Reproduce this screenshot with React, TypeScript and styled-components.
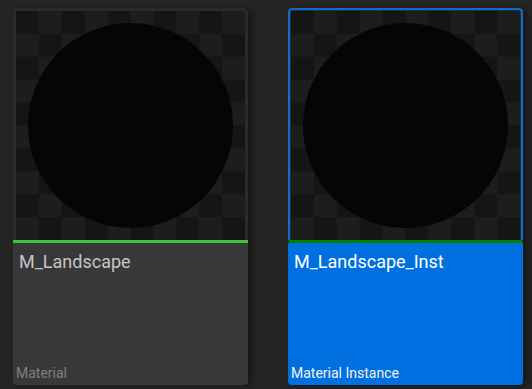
import React from 'react';
import styled, { createGlobalStyle, css } from 'styled-components';

const GlobalStyle = createGlobalStyle`
  html, body {
    margin: 0;
    padding: 0;
    background-color: #242424;
  }
  body {
    font-family: Roboto, 'Liberation Sans', sans-serif;
  }
`;

const Browser = styled.div`
  display: flex;
  flex-direction: row;
  gap: 40px;
  padding: 8px 0 0 13px;
  height: 389px;
  box-sizing: border-box;
`;

const Card = styled.div<{ $selected?: boolean }>`
  width: 235px;
  height: 377px;
  display: flex;
  flex-direction: column;
  border-radius: 4px;
  overflow: hidden;
  background-color: #2a2a2a;
  box-shadow: 4px 1px 6px rgba(0, 0, 0, 0.35);
`;

const ThumbFrame = styled.div<{ $selected?: boolean }>`
  padding: 3px 3px 0;
  border-radius: 4px 4px 0 0;
  ${({ $selected }) =>
    $selected &&
    css`
      padding: 1px 1px 0;
      border: 2px solid #0f6bd6;
      border-bottom: none;
    `}
`;

const Thumb = styled.div`
  width: 229px;
  height: 229px;
  display: flex;
  align-items: center;
  justify-content: center;
  background-color: #151515;
  background-image: conic-gradient(
    #1d1d1d 0 25%,
    #151515 0 50%,
    #1d1d1d 0 75%,
    #151515 0
  );
  background-size: 45.8px 45.8px;
`;

const Sphere = styled.div`
  width: 205px;
  height: 205px;
  border-radius: 50%;
  background-color: #050505;
`;

const TypeBar = styled.div<{ $color: string; $selected?: boolean }>`
  height: 3px;
  background-color: ${({ $color }) => $color};
  ${({ $selected }) =>
    $selected &&
    css`
      margin: 0 1px;
    `}
`;

const Info = styled.div<{ $selected?: boolean }>`
  flex: 1;
  display: flex;
  flex-direction: column;
  justify-content: space-between;
  padding: 8px 3px 3px;
  background-color: ${({ $selected }) => ($selected ? '#0070e0' : '#383838')};
`;

const Name = styled.span<{ $selected?: boolean }>`
  margin-left: 3px;
  font-size: 18px;
  line-height: 1.2;
  color: ${({ $selected }) => ($selected ? '#ffffff' : '#c6c6c6')};
`;

const AssetType = styled.span<{ $selected?: boolean }>`
  font-size: 14px;
  line-height: 1.2;
  color: ${({ $selected }) => ($selected ? '#f2f2f2' : '#808080')};
`;

type Asset = {
  name: string;
  type: string;
  color: string;
  selected?: boolean;
};

const assets: Asset[] = [
  { name: 'M_Landscape', type: 'Material', color: '#3cc23c' },
  { name: 'M_Landscape_Inst', type: 'Material Instance', color: '#008300', selected: true },
];

function AssetTile({ asset }: { asset: Asset }) {
  return (
    <Card $selected={asset.selected}>
      <ThumbFrame $selected={asset.selected}>
        <Thumb>
          <Sphere />
        </Thumb>
      </ThumbFrame>
      <TypeBar $color={asset.color} $selected={asset.selected} />
      <Info $selected={asset.selected}>
        <Name $selected={asset.selected}>{asset.name}</Name>
        <AssetType $selected={asset.selected}>{asset.type}</AssetType>
      </Info>
    </Card>
  );
}

function App() {
  return (
    <>
      <GlobalStyle />
      <Browser>
        {assets.map((a) => (
          <AssetTile key={a.name} asset={a} />
        ))}
      </Browser>
    </>
  );
}

export default App;
